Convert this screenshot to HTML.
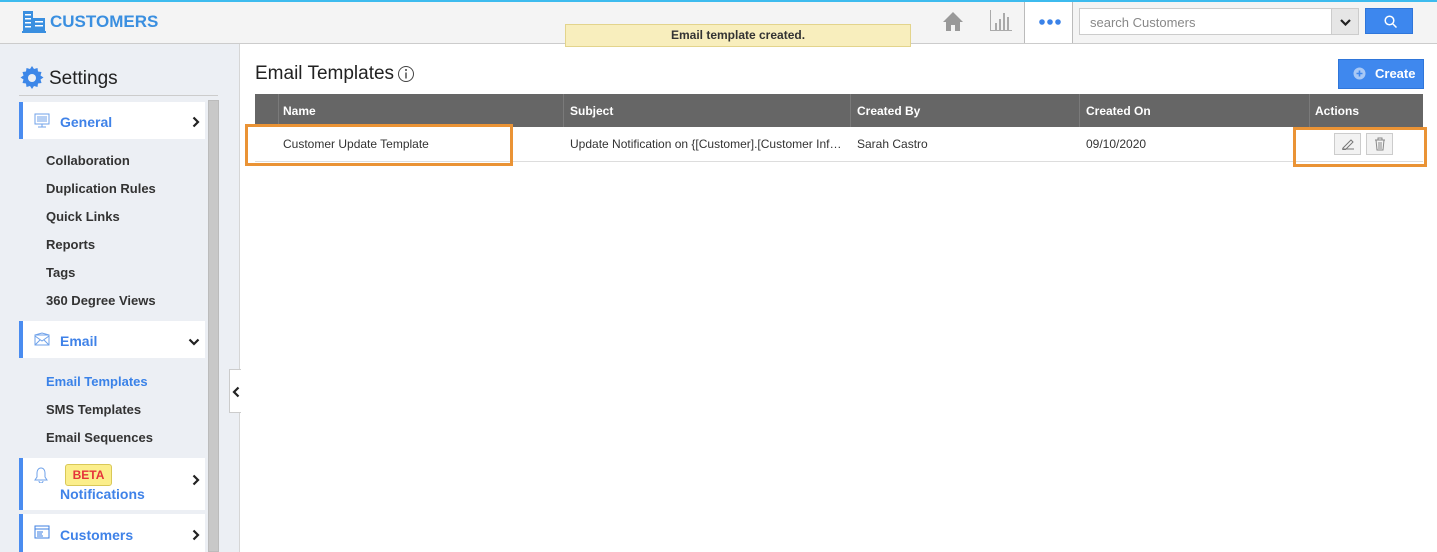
<!DOCTYPE html><html><head><style>
*{box-sizing:border-box;margin:0;padding:0}
body{width:1437px;height:552px;overflow:hidden;font-family:"Liberation Sans",Arial,sans-serif;background:#fff;position:relative}
.a{position:absolute}
svg{display:block}
.hdr{left:0;top:0;width:1437px;height:44px;background:#f4f4f4;border-top:2px solid #3dbbee;border-bottom:1px solid #ccc}
.side{left:0;top:44px;width:240px;height:508px;background:#eceff4;border-right:1px solid #d6d6d6}
.item{left:19px;width:186px;background:#fff;border-left:4px solid #4a8cf0}
.item span{position:absolute;left:37px;color:#3f82e8;font-size:14px;font-weight:bold}
.sub{left:46px;font-size:13px;font-weight:bold;color:#333}
.chev{position:absolute;right:5px}
</style></head><body>
<div class="a hdr"></div>
<svg class="a" style="left:22px;top:11px" width="24" height="22" viewBox="0 0 24 22"><rect x="1" y="0" width="10" height="20" fill="#3a8fe0"/><rect x="11" y="7" width="12" height="13" fill="#3a8fe0"/><g fill="#fff"><rect x="3" y="3" width="6" height="1.5"/><rect x="3" y="7" width="6" height="1.5"/><rect x="3" y="11" width="6" height="1.5"/><rect x="3" y="15" width="6" height="1.5"/><rect x="13" y="10" width="8" height="1.5"/><rect x="13" y="14" width="8" height="1.5"/></g><rect x="0" y="20" width="24" height="2" fill="#3a8fe0"/></svg>
<div class="a" style="left:50px;top:12px;font-size:17px;font-weight:bold;color:#3a8fe0">CUSTOMERS</div>
<div class="a" style="left:565px;top:24px;width:346px;height:23px;background:#f8eebd;border:1px solid #e3d48c;font-size:12px;font-weight:bold;text-align:center;line-height:21px;color:#333">Email template created.</div>
<svg class="a" style="left:942px;top:11px" width="22" height="21" viewBox="0 0 22 21"><path d="M11 1L1 11h3v9h5v-6h4v6h5v-9h3z" fill="#999"/></svg>
<svg class="a" style="left:989px;top:10px" width="24" height="22"><g fill="#aaa"><rect x="1" y="0" width="1" height="21"/><rect x="1" y="20" width="22" height="1"/><rect x="6" y="13" width="2" height="7"/><rect x="10" y="9" width="2" height="11"/><rect x="14" y="3" width="2" height="17"/><rect x="18" y="7" width="2" height="13"/></g></svg>
<div class="a" style="left:1024px;top:2px;width:49px;height:41px;background:#fff;border-left:1px solid #bbb;border-right:1px solid #bbb"></div>
<svg class="a" style="left:1039px;top:19px" width="22" height="6"><circle cx="3" cy="3" r="2.8" fill="#3a82e8"/><circle cx="11" cy="3" r="2.8" fill="#3a82e8"/><circle cx="19" cy="3" r="2.8" fill="#3a82e8"/></svg>
<div class="a" style="left:1079px;top:8px;width:280px;height:27px;background:#fff;border:1px solid #ccc;font-size:13px;color:#888;padding:6px 10px">search Customers</div>
<div class="a" style="left:1331px;top:8px;width:28px;height:27px;background:#e6e6e6;border:1px solid #ccc"><svg style="margin:10px 0 0 8px" width="11" height="7"><path d="M1 1l4.5 4.5L10 1" stroke="#222" stroke-width="2.2" fill="none"/></svg></div>
<div class="a" style="left:1365px;top:8px;width:48px;height:26px;background:#3d87ee;border:1px solid #2f76da"><svg style="margin:6px 0 0 18px" width="13" height="13"><circle cx="5.5" cy="5.5" r="4.3" fill="none" stroke="#fff" stroke-width="1.5"/><path d="M9 9l3.5 3.5" stroke="#fff" stroke-width="1.5"/></svg></div>
<div class="a side"></div>
<svg class="a" style="left:20px;top:66px" width="24" height="24" viewBox="0 0 24 24"><path fill="#3d87e8" d="M12 0l2 3 3.5-1 .5 3.5 3.5.5-1 3.5 3 2-3 2 1 3.5-3.5.5-.5 3.5-3.5-1-2 3-2-3-3.5 1-.5-3.5-3.5-.5 1-3.5-3-2 3-2-1-3.5 3.5-.5.5-3.5 3.5 1z"/><circle cx="12" cy="12" r="4" fill="#eceff4"/></svg>
<div class="a" style="left:49px;top:68px;font-size:19px;color:#222">Settings</div>
<div class="a" style="left:19px;top:95px;width:199px;height:1px;background:#ccc"></div>
<div class="a" style="left:208px;top:100px;width:11px;height:452px;background:#c8c8c8;border:1px solid #bbb"></div>
<div class="a item" style="top:102px;height:37px"><svg style="position:absolute;left:11px;top:11px" width="16" height="16"><rect x="1" y="1" width="14" height="10" fill="none" stroke="#6fa2ea"/><path d="M3 4h10M3 6h10M3 8h10M8 11v3M4 14h8" stroke="#6fa2ea"/></svg><span style="top:12px">General</span><svg class="chev" style="top:14px" width="8" height="12"><path d="M1.5 1.5l4.5 4.5-4.5 4.5" stroke="#222" stroke-width="2.2" fill="none"/></svg></div>
<div class="a sub" style="top:153px">Collaboration</div>
<div class="a sub" style="top:181px">Duplication Rules</div>
<div class="a sub" style="top:209px">Quick Links</div>
<div class="a sub" style="top:237px">Reports</div>
<div class="a sub" style="top:265px">Tags</div>
<div class="a sub" style="top:293px">360 Degree Views</div>
<div class="a item" style="top:321px;height:37px"><svg style="position:absolute;left:11px;top:11px" width="16" height="14"><rect x="1" y="3" width="14" height="10" fill="none" stroke="#6fa2ea"/><path d="M1 3l7-2 7 2M1 4l7 5 7-5M1 13l5-5M15 13l-5-5" fill="none" stroke="#6fa2ea"/></svg><span style="top:12px">Email</span><svg class="chev" style="top:17px" width="12" height="8"><path d="M1.5 1.5l4.5 4.5 4.5-4.5" stroke="#222" stroke-width="2.2" fill="none"/></svg></div>
<div class="a sub" style="top:374px;color:#3a82e8">Email Templates</div>
<div class="a sub" style="top:402px">SMS Templates</div>
<div class="a sub" style="top:430px">Email Sequences</div>
<div class="a item" style="top:458px;height:52px"><svg style="position:absolute;left:11px;top:9px" width="14" height="16"><path d="M7 1c-3 0-4 3-4 5v4l-2 3h12l-2-3V6c0-2-1-5-4-5zM5 14a2 2 0 004 0" fill="none" stroke="#6fa2ea"/></svg><div style="position:absolute;left:42px;top:6px;width:47px;height:22px;background:#fbee8b;border:1px solid #d9c857;border-radius:3px;color:#e5333a;font-size:12px;font-weight:bold;text-align:center;line-height:20px">BETA</div><span style="top:28px">Notifications</span><svg class="chev" style="top:16px" width="8" height="12"><path d="M1.5 1.5l4.5 4.5-4.5 4.5" stroke="#222" stroke-width="2.2" fill="none"/></svg></div>
<div class="a item" style="top:514px;height:38px"><svg style="position:absolute;left:11px;top:11px" width="16" height="14"><rect x="1" y="1" width="14" height="12" fill="none" stroke="#3d7fe0"/><path d="M1 4h14M3 7h6M3 9h5M3 11h6" stroke="#3d7fe0"/></svg><span style="top:13px">Customers</span><svg class="chev" style="top:15px" width="8" height="12"><path d="M1.5 1.5l4.5 4.5-4.5 4.5" stroke="#222" stroke-width="2.2" fill="none"/></svg></div>
<div class="a" style="left:229px;top:369px;width:12px;height:44px;background:#fff;border:1px solid #ccc;border-right:none"><svg style="margin:16px 0 0 2px" width="8" height="12"><path d="M6.5 1.5L2 6l4.5 4.5" stroke="#222" stroke-width="2.2" fill="none"/></svg></div>
<div class="a" style="left:255px;top:63px;font-size:19px;color:#222">Email Templates</div>
<svg class="a" style="left:397px;top:65px" width="18" height="18"><circle cx="9" cy="9" r="7.5" fill="none" stroke="#444"/><rect x="8.3" y="7.5" width="1.4" height="6" fill="#444"/><circle cx="9" cy="5" r="1" fill="#444"/></svg>
<div class="a" style="left:1338px;top:59px;width:86px;height:30px;background:#3f88ee;border:1px solid #2f76da;color:#fff;font-size:13px;font-weight:bold;line-height:28px;padding-left:36px">Create</div>
<svg class="a" style="left:1353px;top:67px" width="13" height="13"><circle cx="6.5" cy="6.5" r="6" fill="#a8c8f5"/><path d="M6.5 3.5v6M3.5 6.5h6" stroke="#3f88ee" stroke-width="1.6"/></svg>
<div class="a" style="left:255px;top:94px;width:1168px;height:33px;background:#666"></div>
<div class="a" style="left:278px;top:94px;width:1px;height:33px;background:#7a7a7a"></div>
<div class="a" style="left:563px;top:94px;width:1px;height:33px;background:#7a7a7a"></div>
<div class="a" style="left:850px;top:94px;width:1px;height:33px;background:#7a7a7a"></div>
<div class="a" style="left:1079px;top:94px;width:1px;height:33px;background:#7a7a7a"></div>
<div class="a" style="left:1309px;top:94px;width:1px;height:33px;background:#7a7a7a"></div>
<div class="a" style="top:104px;left:283px;color:#fff;font-size:12px;font-weight:bold">Name</div>
<div class="a" style="top:104px;left:570px;color:#fff;font-size:12px;font-weight:bold">Subject</div>
<div class="a" style="top:104px;left:857px;color:#fff;font-size:12px;font-weight:bold">Created By</div>
<div class="a" style="top:104px;left:1086px;color:#fff;font-size:12px;font-weight:bold">Created On</div>
<div class="a" style="top:104px;left:1315px;color:#fff;font-size:12px;font-weight:bold">Actions</div>
<div class="a" style="left:255px;top:161px;width:1168px;height:1px;background:#ddd"></div>
<div class="a" style="top:137px;left:283px;font-size:12px;color:#333">Customer Update Template</div>
<div class="a" style="top:137px;left:570px;font-size:12px;color:#333">Update Notification on {[Customer].[Customer Inf…</div>
<div class="a" style="top:137px;left:857px;font-size:12px;color:#333">Sarah Castro</div>
<div class="a" style="top:137px;left:1086px;font-size:12px;color:#333">09/10/2020</div>
<div class="a" style="left:245px;top:124px;width:268px;height:42px;border:3px solid #ea9335"></div>
<div class="a" style="left:1293px;top:127px;width:134px;height:40px;border:3px solid #ea9335"></div>
<div class="a" style="left:1334px;top:133px;width:27px;height:22px;background:#f2f2f2;border:1px solid #ccc"><svg style="margin:4px 0 0 6px" width="14" height="12"><path d="M2 10L10 2l2 2-8 8H2zM1 11h12" stroke="#777" fill="none"/></svg></div>
<div class="a" style="left:1366px;top:133px;width:27px;height:22px;background:#f2f2f2;border:1px solid #ccc"><svg style="margin:3px 0 0 7px" width="12" height="14"><path d="M1 3h10M4 3V1h4v2M2 3l1 10h6l1-10M5 5v7M7 5v7" stroke="#888" fill="none"/></svg></div>
</body></html>
